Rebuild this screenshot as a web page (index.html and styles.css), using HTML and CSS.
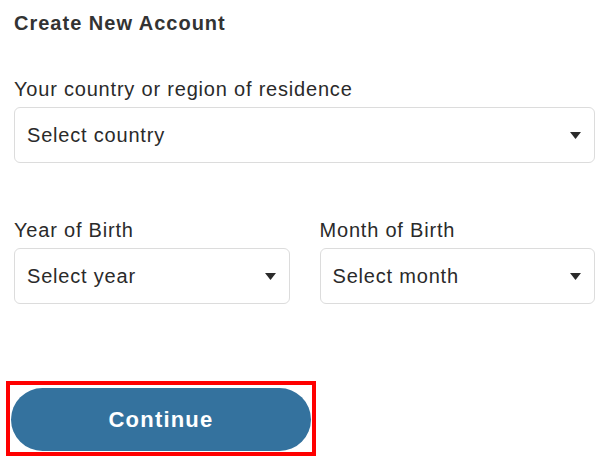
FILE: index.html
```html
<!DOCTYPE html>
<html>
<head>
<meta charset="utf-8">
<link rel="stylesheet" href="styles.css">
</head>
<body>
<div class="page">
  <h1 class="title">Create New Account</h1>
  <div class="field field-country">
    <div class="label">Your country or region of residence</div>
    <div class="select">
      <span>Select country</span>
      <svg class="caret" width="11" height="7" viewBox="0 0 11 7"><path d="M0 0H11L5.5 7Z" fill="#2b2b2b"/></svg>
    </div>
  </div>
  <div class="row">
    <div class="field">
      <div class="label">Year of Birth</div>
      <div class="select">
        <span>Select year</span>
        <svg class="caret" width="11" height="7" viewBox="0 0 11 7"><path d="M0 0H11L5.5 7Z" fill="#2b2b2b"/></svg>
      </div>
    </div>
    <div class="field">
      <div class="label">Month of Birth</div>
      <div class="select">
        <span>Select month</span>
        <svg class="caret" width="11" height="7" viewBox="0 0 11 7"><path d="M0 0H11L5.5 7Z" fill="#2b2b2b"/></svg>
      </div>
    </div>
  </div>
  <div class="btn-wrap">
    <button class="btn">Continue</button>
  </div>
</div>
</body>
</html>
```
FILE: styles.css
```css
html, body {
  margin: 0;
  padding: 0;
  background: #ffffff;
}
.page {
  padding: 10px 12px 7px 14px;
  font-family: "Liberation Sans", Arial, sans-serif;
  color: #2a2a2a;
}
.title {
  margin: 0;
  font-size: 20px;
  font-weight: bold;
  line-height: 26px;
  letter-spacing: 1px;
  color: #333333;
}
.field-country {
  margin-top: 40px;
}
.label {
  font-size: 20px;
  line-height: 26px;
  letter-spacing: 0.8px;
  color: #2a2a2a;
}
.select {
  margin-top: 5px;
  height: 56px;
  box-sizing: border-box;
  border: 1px solid #dcdcdc;
  border-radius: 6px;
  display: flex;
  align-items: center;
  justify-content: space-between;
  padding: 0 13px 0 12px;
  font-size: 20px;
  letter-spacing: 0.8px;
  color: #2a2a2a;
}
.row {
  margin-top: 54px;
  display: grid;
  grid-template-columns: 1fr 1fr;
  column-gap: 30px;
}
.btn-wrap {
  margin-top: 77px;
  margin-left: -8px;
  width: 310px;
  box-sizing: border-box;
  padding: 3px 1px 1px 1px;
  border: 4px solid #ff0000;
}
.btn {
  display: block;
  width: 300px;
  height: 63px;
  border: none;
  border-radius: 32px;
  background: #34729e;
  color: #ffffff;
  font-family: "Liberation Sans", Arial, sans-serif;
  font-weight: bold;
  font-size: 22px;
  letter-spacing: 1.2px;
  padding: 0;
  cursor: pointer;
}
```
